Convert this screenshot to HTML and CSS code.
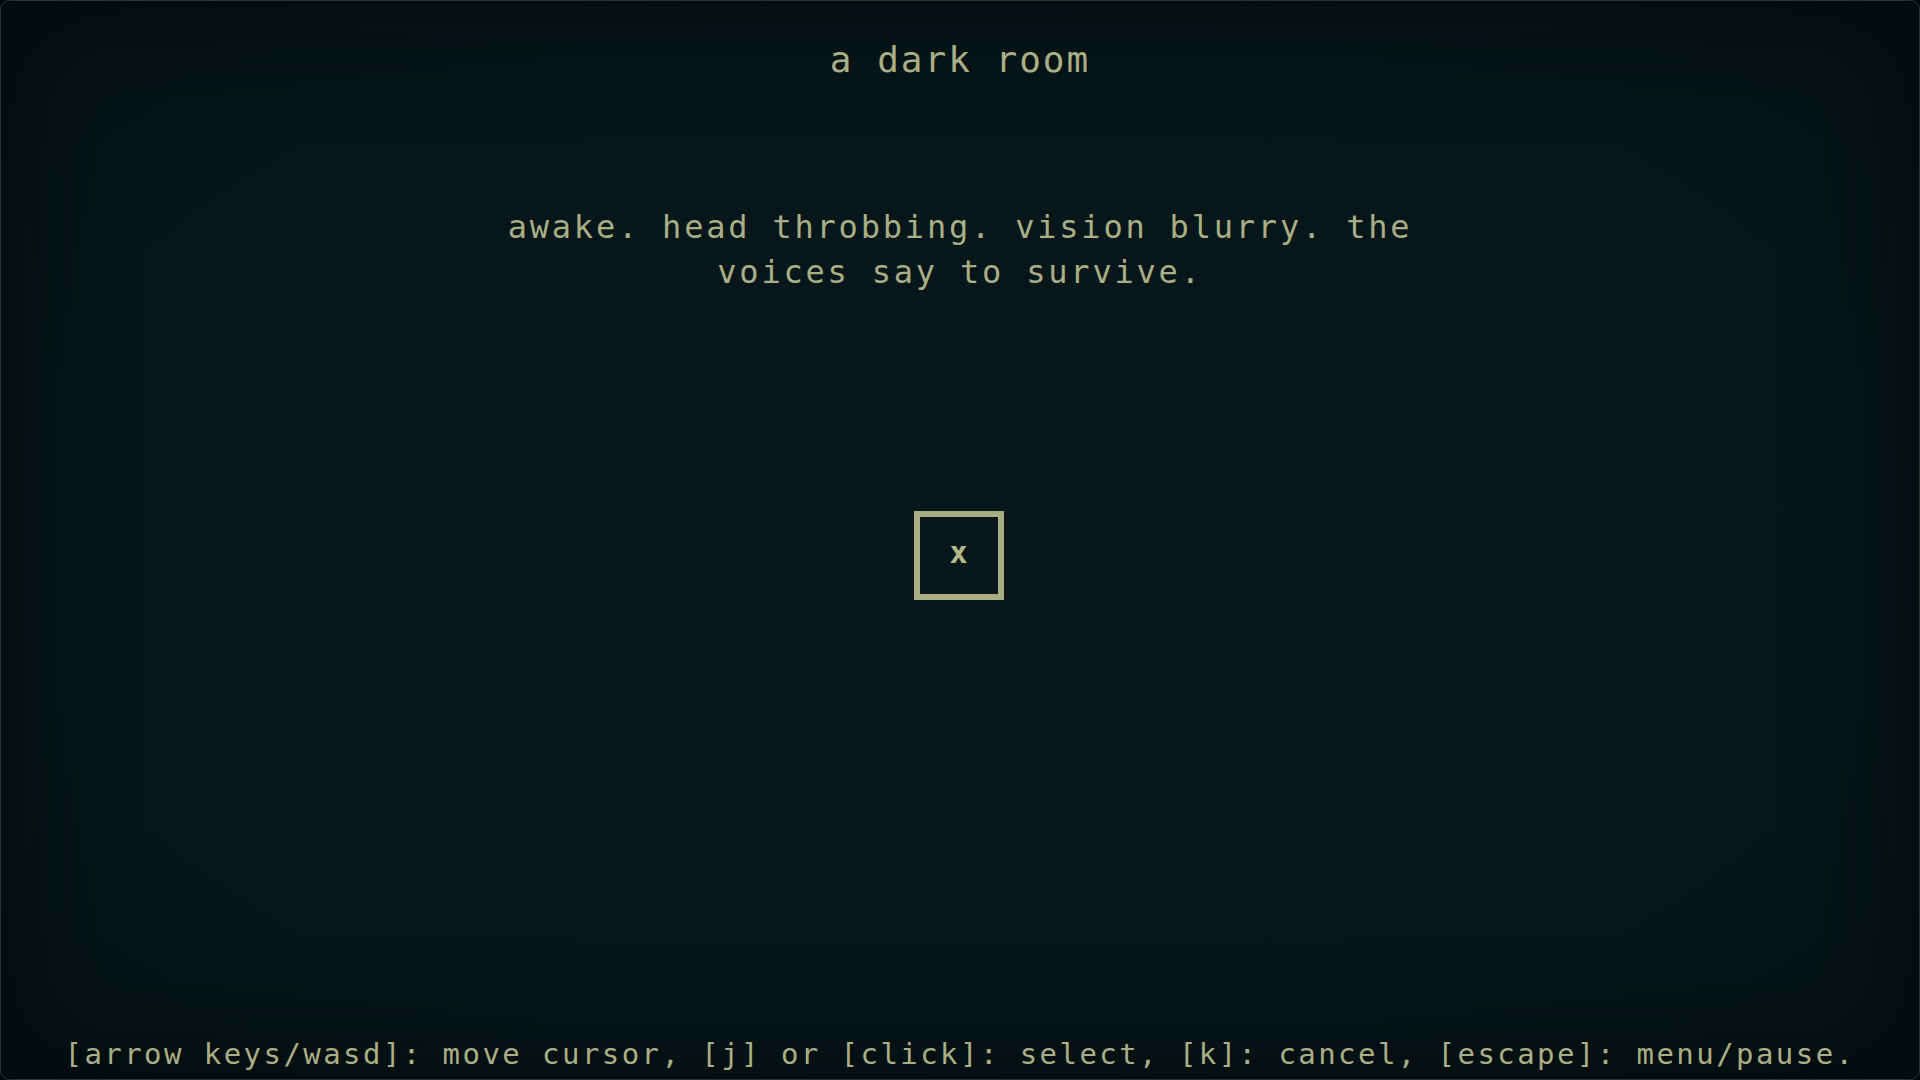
FILE: index.html
```html
<!DOCTYPE html>
<html lang="en">
<head>
<meta charset="utf-8">
<title>a dark room</title>
<link rel="stylesheet" href="styles.css">
</head>
<body>
<main class="screen">
  <h1 class="title">a dark room</h1>
  <p class="story">awake. head throbbing. vision blurry. the voices say to survive.</p>
  <div class="cell"><span class="mark">x</span></div>
  <footer class="controls">[arrow keys/wasd]: move cursor, [j] or [click]: select, [k]: cancel, [escape]: menu/pause.</footer>
</main>
</body>
</html>
```
FILE: styles.css
```css
html, body {
  margin: 0;
  padding: 0;
  background: #040b0c;
}

.screen {
  box-sizing: border-box;
  width: 1920px;
  height: 1080px;
  border: 1px solid #26343a;
  border-radius: 10px;
  background: radial-gradient(ellipse 70% 70% at 50% 50%, #07171b 0%, #07161a 70%, #061214 100%);
  box-shadow: inset 0 0 90px 30px rgba(2, 8, 9, 0.55);
  display: flex;
  flex-direction: column;
  align-items: center;
  padding: 40.5px 0 10.5px;
  font-family: "DejaVu Sans Mono", "Liberation Mono", monospace;
  color: #aaae84;
  overflow: hidden;
}

.title {
  margin: 0;
  font-size: 36px;
  line-height: 36px;
  font-weight: normal;
  letter-spacing: 2px;
  text-align: center;
}

.story {
  margin: 127px 0 0;
  width: 940px;
  font-size: 32px;
  line-height: 45px;
  letter-spacing: 2.8px;
  text-align: center;
}

.cell {
  box-sizing: border-box;
  margin: 216px 3px 0 0;
  width: 90px;
  height: 89px;
  border: 6px solid #a9ad83;
  display: flex;
  align-items: center;
  justify-content: center;
}

.mark {
  font-size: 30px;
  line-height: 30px;
  color: #b4b98c;
  font-weight: bold;
  margin-top: -4px;
}

.controls {
  margin-top: auto;
  font-size: 29px;
  line-height: 29px;
  letter-spacing: 2.44px;
  text-align: center;
  white-space: nowrap;
}
```
